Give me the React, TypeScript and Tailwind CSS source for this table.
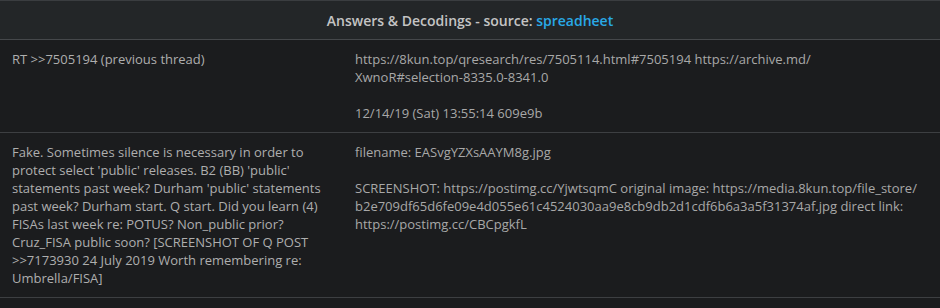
import React from "react";

export default function App() {
  const rows: { left: string; right: React.ReactNode[] }[] = [
    {
      left: "RT >>7505194 (previous thread)",
      right: [
        <>
          https://8kun.top/qresearch/res/7505114.html#7505194 https://archive.md/
          <wbr />
          <span className="whitespace-nowrap">XwnoR#selection-8335.0-8341.0</span>
        </>,
        "12/14/19 (Sat) 13:55:14 609e9b",
      ],
    },
    {
      left:
        "Fake. Sometimes silence is necessary in order to protect select 'public' releases. B2 (BB) 'public' statements past week? Durham 'public' statements past week? Durham start. Q start. Did you learn (4) FISAs last week re: POTUS? Non_public prior? Cruz_FISA public soon? [SCREENSHOT OF Q POST >>7173930 24 July 2019 Worth remembering re: Umbrella/FISA]",
      right: [
        "filename: EASvgYZXsAAYM8g.jpg",
        <>
          SCREENSHOT: https://postimg.cc/YjwtsqmC original image: https://media.8kun.top/file_store/
          <wbr />
          b2e709df65d6fe09e4d055e61c4524030aa9e8cb9db2d1cdf6b6a3a5f31374af.jpg direct link: https://postimg.cc/CBCpgkfL
        </>,
      ],
    },
  ];
  return (
    <div
      className="w-[940px] h-[308px] bg-[#1b1c1e] overflow-hidden"
      style={{ fontFamily: '"Open Sans", sans-serif' }}
    >
      <div className="h-[40px] bg-[#232628] border-t border-[#3a3d40] border-b border-b-[#45484b] flex items-center justify-center text-[14px] font-semibold text-[#c4c4c4]">
        Answers &amp; Decodings - source:&nbsp;<span className="text-[#29a9e6]">spreadheet</span>
      </div>
      {rows.map((r, i) => (
        <div key={i} className="grid grid-cols-[343px_1fr] border-b border-[#3d3f42]">
          <div className="pl-[12px] pr-[12px] pt-[10px] pb-[10px] text-[13px] leading-[18px] text-[#aeaeae]">
            {r.left}
          </div>
          <div className="pl-[12px] pr-[10px] pt-[10px] pb-[10px] text-[13px] leading-[18px] text-[#a8a8a8] flex flex-col gap-[18px] break-words">
            {r.right.map((t, j) => (
              <div key={j}>{t}</div>
            ))}
          </div>
        </div>
      ))}
    </div>
  );
}
